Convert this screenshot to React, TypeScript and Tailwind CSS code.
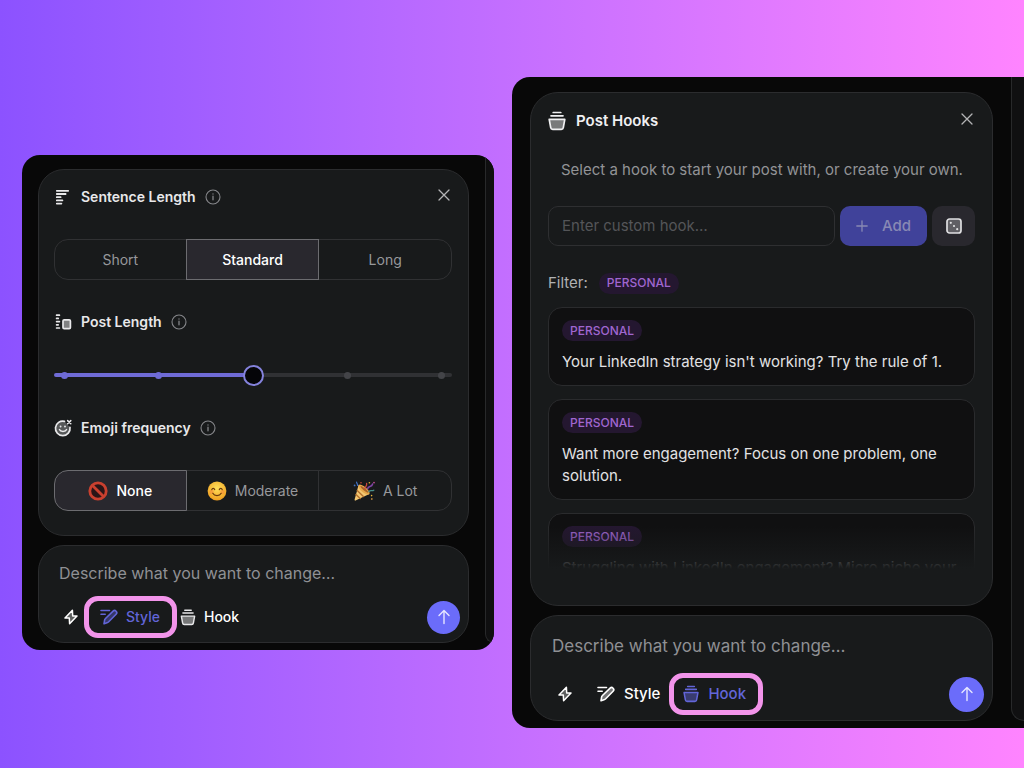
import { useState } from "react";
import type { ReactNode } from "react";

function SentenceIcon() {
  return (
    <svg width="18" height="18" viewBox="0 0 18 18" className="shrink-0" stroke="currentColor" strokeWidth="1.8" strokeLinecap="round">
      <path d="M2.8 2.8h11.4M2.8 6h8.8M2.8 9.2h3.8M2.8 12.4h5.6M2.8 15.6h4.6" />
    </svg>
  );
}

function PostLengthIcon() {
  return (
    <svg width="18" height="18" viewBox="0 0 18 18" className="shrink-0" fill="none" stroke="currentColor" strokeWidth="1.7">
      <path d="M2.6 2.2h2.8M2.6 5.4h1.6M2.6 8.6h2.8M2.6 11.8h1.6M2.6 15h2.8" strokeLinecap="round" />
      <rect x="9" y="6.9" width="7.4" height="8.8" rx="1.2" fill="currentColor" fillOpacity=".5" />
    </svg>
  );
}

function EmojiIcon() {
  return (
    <svg width="18" height="18" viewBox="0 0 18 18" className="shrink-0" fill="none" stroke="currentColor" strokeWidth="1.7" strokeLinecap="round">
      <path d="M10.5 2.3A7.3 7.3 0 1 0 16 8.4" fill="currentColor" fillOpacity=".3" />
      <path d="M13.6 1.6l3.2 3.2M16.8 1.6l-3.2 3.2" strokeWidth="1.5" />
      <path d="M5.4 10.6c1 2.6 6.2 2.6 7.2 0" strokeWidth="1.5" />
      <path d="M6.6 7.4v.1M11 7.4v.1" strokeWidth="1.9" />
    </svg>
  );
}

function HookIcon({ className }: { className: string }) {
  return (
    <svg viewBox="0 0 18 20" className={className} fill="none" stroke="currentColor" strokeWidth="1.7" strokeLinecap="round" strokeLinejoin="round">
      <path d="M5.2 1.5h7.6M3 4.8h12" />
      <path d="M1.2 8.4h15.6l-1.5 8.2a2 2 0 0 1-2 1.7H4.7a2 2 0 0 1-2-1.7z" fill="currentColor" fillOpacity=".45" />
    </svg>
  );
}

function StyleIcon() {
  return (
    <svg width="18" height="16" viewBox="0 0 18 16" className="shrink-0" fill="none" stroke="currentColor" strokeWidth="1.6" strokeLinecap="round" strokeLinejoin="round">
      <path d="M1 1.5h8.5M1 5.3h4.2" />
      <path d="M4 14.8l.6-3.6a3 3 0 0 1 .9-1.7l7.6-7.3a2.1 2.1 0 0 1 3 3l-7.4 7.6a3 3 0 0 1-1.7.9z" fill="currentColor" fillOpacity=".4" />
    </svg>
  );
}

function BoltIcon() {
  return (
    <svg width="14" height="16" viewBox="0 0 14 16" className="shrink-0" fill="none" stroke="currentColor" strokeWidth="1.5" strokeLinejoin="round">
      <path d="M8.4 1.2L1 9h4.3l.3 5.8L13 7H8.7z" fill="currentColor" fillOpacity=".3" />
    </svg>
  );
}

function InfoIcon() {
  return (
    <svg width="16" height="16" viewBox="0 0 16 16" fill="none" stroke="currentColor" strokeLinecap="round">
      <circle cx="8" cy="8" r="7" strokeWidth="1.1" />
      <path d="M8 7.2v3.6M8 4.9v.1" strokeWidth="1.3" />
    </svg>
  );
}

function DiceIcon() {
  return (
    <svg width="16" height="16" viewBox="0 0 16 16" fill="none">
      <rect x="1" y="1" width="14" height="14" rx="2.5" stroke="currentColor" strokeWidth="1.7" fill="currentColor" fillOpacity=".3" />
      <g fill="currentColor">
        <circle cx="4.8" cy="4.8" r="1.1" />
        <circle cx="8" cy="8" r="1.1" />
        <circle cx="11.2" cy="11.2" r="1.1" />
      </g>
    </svg>
  );
}

function ProhibitedEmoji() {
  return (
    <svg width="20" height="20" viewBox="0 0 20 20" fill="none" stroke="#c9402f" strokeWidth="2.8">
      <circle cx="10" cy="10" r="8.2" fill="#2a1517" />
      <path d="M4.2 4.2l11.6 11.6" />
    </svg>
  );
}

function SmileEmoji() {
  return (
    <svg width="20" height="20" viewBox="0 0 20 20" fill="none">
      <defs>
        <radialGradient id="smile" cx=".5" cy=".35" r=".65">
          <stop offset="0" stopColor="#ffe05a" />
          <stop offset="1" stopColor="#f0a020" />
        </radialGradient>
      </defs>
      <circle cx="10" cy="10" r="9.4" fill="url(#smile)" />
      <circle cx="4.6" cy="11" r="2.2" fill="#f58a3a" opacity=".55" />
      <circle cx="15.4" cy="11" r="2.2" fill="#f58a3a" opacity=".55" />
      <path d="M4.8 8.6c.5-1.7 2.4-1.7 2.9 0M12.3 8.6c.5-1.7 2.4-1.7 2.9 0M5.8 12.3c1.6 3 6.8 3 8.4 0" stroke="#6b3a0c" strokeWidth="1.2" strokeLinecap="round" />
    </svg>
  );
}

function PartyEmoji() {
  return (
    <svg width="22" height="20" viewBox="0 0 22 20" fill="none" strokeLinecap="round">
      <path d="M5.6 4L1.6 18.6c-.2.8.3 1.2 1 1L16.4 13z" fill="#f3c873" />
      <path d="M4.2 9.4l6.2 6.2M3 13.6l4.2 4" stroke="#b5702c" strokeWidth="1.4" />
      <ellipse cx="11" cy="8.6" rx="2.8" ry="7" transform="rotate(-50 11 8.6)" fill="#e8a94a" />
      <ellipse cx="11.4" cy="8.3" rx="1.2" ry="5" transform="rotate(-50 11.4 8.3)" fill="#a8652b" />
      <path d="M12 7.5c.2-2.5 2.2-2.2 1.6-5.2" stroke="#c8463e" strokeWidth="1.3" />
      <path d="M14.6 7.8c.6-3.4 4.3-1 5-4.8" stroke="#8046a8" strokeWidth="1.5" />
      <path d="M15.8 10.6c1.8-2 3.2 0 5-1.4" stroke="#4a8f8a" strokeWidth="1.3" />
      <path d="M4.6 4.4C5 2.8 3.4 2.6 3.6 1.2" stroke="#3f6fc0" strokeWidth="1.3" />
      <g>
        <circle cx="1.6" cy="4.4" r=".9" fill="#3f6fc0" />
        <circle cx="8" cy="1.8" r=".8" fill="#c8463e" />
        <circle cx="16.4" cy="1.8" r=".8" fill="#e8b93c" />
        <circle cx="21" cy="1.6" r=".9" fill="#c04a90" />
        <circle cx="18.6" cy="14.6" r=".8" fill="#e8b93c" />
        <circle cx="18.8" cy="18" r=".9" fill="#b8823a" />
      </g>
    </svg>
  );
}

function CloseButton() {
  return (
    <button type="button" aria-label="Close" className="ml-auto flex h-5 w-4 items-center justify-center self-start text-[#b4b4b6]">
      <svg width="12" height="12" viewBox="0 0 12 12" stroke="currentColor" strokeWidth="1.3" strokeLinecap="round">
        <path d="M1 1l10 10M11 1L1 11" />
      </svg>
    </button>
  );
}

function SettingTitle({ icon, title, close }: { icon: ReactNode; title: string; close?: boolean }) {
  return (
    <div className="flex h-6 items-center text-[#e8e8ea]">
      {icon}
      <h2 className="ml-[9px] text-sm font-semibold">{title}</h2>
      <button type="button" aria-label={`About ${title}`} className="ml-[9px] text-[#85868a]">
        <InfoIcon />
      </button>
      {close && <CloseButton />}
    </div>
  );
}

type Option = { label: string; emoji?: ReactNode };

function Segmented({ options, initial }: { options: Option[]; initial: string }) {
  const [value, setValue] = useState(initial);

  return (
    <div className="grid h-[41px] grid-cols-3">
      {options.map((option) => (
        <button
          key={option.label}
          type="button"
          aria-pressed={value === option.label}
          onClick={() => setValue(option.label)}
          className={`-ml-px flex items-center justify-center gap-2 border text-sm first:ml-0 first:rounded-l-[14px] last:rounded-r-[14px] ${
            value === option.label
              ? "z-10 border-[#6c6c70] bg-[#29282e] font-medium text-white"
              : "border-[#303133] text-[#97989b]"
          }`}
        >
          {option.emoji}
          {option.label}
        </button>
      ))}
    </div>
  );
}

function LengthSlider() {
  const [value, setValue] = useState(2);
  const percent = (value / 4) * 100;

  return (
    <div className="relative flex h-[22px] items-center">
      <input
        type="range"
        min={0}
        max={4}
        value={value}
        aria-label="Post Length"
        onChange={(e) => setValue(Number(e.target.value))}
        className="h-1 w-full appearance-none rounded-full [&::-webkit-slider-thumb]:relative [&::-webkit-slider-thumb]:z-10 [&::-webkit-slider-thumb]:h-[21px] [&::-webkit-slider-thumb]:w-[21px] [&::-webkit-slider-thumb]:appearance-none [&::-webkit-slider-thumb]:rounded-full [&::-webkit-slider-thumb]:border-2 [&::-webkit-slider-thumb]:border-[#8482dc] [&::-webkit-slider-thumb]:bg-[#050508]"
        style={{ background: `linear-gradient(to right, #6f6bd6 ${percent}%, #303134 ${percent}%)` }}
      />
      <div className="pointer-events-none absolute inset-x-0 flex justify-between px-[7px]">
        {[0, 1, 2, 3, 4].map((step) => (
          <span
            key={step}
            className={`h-[7px] w-[7px] rounded-full ${
              step === value ? "opacity-0" : step < value ? "bg-[#6f6bd6]" : "bg-[#434448]"
            }`}
          />
        ))}
      </div>
    </div>
  );
}

function Badge() {
  return (
    <span className="inline-flex h-[21px] items-center rounded-full bg-[#241730] px-2 text-xs font-medium text-[#a066d0]">
      PERSONAL
    </span>
  );
}

const hooks = [
  "Your LinkedIn strategy isn't working? Try the rule of 1.",
  "Want more engagement? Focus on one problem, one solution.",
  "Struggling with LinkedIn engagement? Micro niche your",
];

const highlight = "h-[42px] rounded-[14px] border-[5px] border-[#f294ea] text-[#6265d8]";

function StylePanel() {
  return (
    <section className="flex overflow-hidden rounded-[18px] bg-[#080808]">
      <div className="flex min-w-0 flex-1 flex-col gap-[9px] px-4 pt-[14px] pb-[7px]">
        <div className="flex flex-col gap-[30px] rounded-[26px] border border-[#2b2c2e] bg-[#181a1b] pt-[15px] pr-4 pb-6 pl-[15px]">
          <SettingTitle icon={<SentenceIcon />} title="Sentence Length" close />
          <Segmented initial="Standard" options={[{ label: "Short" }, { label: "Standard" }, { label: "Long" }]} />
          <SettingTitle icon={<PostLengthIcon />} title="Post Length" />
          <LengthSlider />
          <SettingTitle icon={<EmojiIcon />} title="Emoji frequency" />
          <Segmented
            initial="None"
            options={[
              { label: "None", emoji: <ProhibitedEmoji /> },
              { label: "Moderate", emoji: <SmileEmoji /> },
              { label: "A Lot", emoji: <PartyEmoji /> },
            ]}
          />
        </div>

        <form
          onSubmit={(e) => e.preventDefault()}
          className="rounded-[26px] border border-[#2b2c2e] bg-[#181a1b] pt-[15px] pr-2 pb-1 pl-5"
        >
          <input
            type="text"
            aria-label="Describe what you want to change"
            placeholder="Describe what you want to change…"
            className="mb-[11px] block h-6 w-full text-base placeholder-[#8f9094] outline-none"
          />
          <div className="flex items-center pl-[5px] text-sm font-medium text-white">
            <button type="button" aria-label="Quick actions" className="w-5">
              <BoltIcon />
            </button>
            <button type="button" className={`flex items-center gap-2 pr-3 pl-[11px] ${highlight}`}>
              <StyleIcon />
              Style
            </button>
            <button type="button" className="ml-[3px] flex items-center gap-2">
              <HookIcon className="h-[17px] w-4 text-[#e8e8ea]" />
              Hook
            </button>
            <button type="submit" aria-label="Send" className="ml-auto flex h-[33px] w-[33px] items-center justify-center rounded-full bg-[#6b6cfa]">
              <SendArrow />
            </button>
          </div>
        </form>
      </div>
      <div className="mb-[7px] w-[9px] rounded-bl-[14px] border-b border-l border-[#28292a] bg-[#0f0f10]" />
    </section>
  );
}

function SendArrow() {
  return (
    <svg width="14" height="16" viewBox="0 0 14 16" fill="none" stroke="#e6e6ff" strokeWidth="1.4" strokeLinecap="round" strokeLinejoin="round">
      <path d="M7 14.5v-13M2 6.5l5-5 5 5" />
    </svg>
  );
}

function HooksPanel() {
  return (
    <section className="flex overflow-hidden rounded-l-[18px] bg-[#080808]">
      <div className="flex min-w-0 flex-1 flex-col gap-[9px] px-[18px] pt-[15px] pb-[7px]">
        <div className="rounded-[28px] border border-[#2b2c2e] bg-[#181a1b] px-[17px] pt-4 pb-[13px]">
          <div className="flex h-6 items-center text-[#f0f0f2]">
            <HookIcon className="h-5 w-[18px]" />
            <h2 className="ml-[10px] text-[15px] font-semibold">Post Hooks</h2>
            <CloseButton />
          </div>
          <p className="mt-[26px] pl-[13px] text-[15px] leading-[22px] text-[#929396]">
            Select a hook to start your post with, or create your own.
          </p>
          <form onSubmit={(e) => e.preventDefault()} className="mt-[25px] flex h-10 gap-[5px]">
            <input
              type="text"
              aria-label="Custom hook"
              placeholder="Enter custom hook…"
              className="min-w-0 flex-1 rounded-[10px] border border-[#2e2f31] px-[13px] text-[15px] placeholder-[#545558] outline-none"
            />
            <button type="submit" className="flex w-[87px] items-center justify-center gap-[14px] rounded-[10px] bg-[#40429a] text-[15px] font-medium text-[#8889b4]">
              <svg width="12" height="12" viewBox="0 0 12 12" stroke="currentColor" strokeWidth="1.3" strokeLinecap="round">
                <path d="M6 .8v10.4M.8 6h10.4" />
              </svg>
              Add
            </button>
            <button type="button" aria-label="Random hook" className="flex w-[43px] items-center justify-center rounded-[10px] bg-[#29282e] text-[#e0e0e2]">
              <DiceIcon />
            </button>
          </form>
          <div className="mt-[26px] flex h-[22px] items-center gap-[11px] text-[15px] text-[#b0b1b3]">
            Filter:
            <button type="button" className="flex">
              <Badge />
            </button>
          </div>
          <div className="relative mt-[13px]">
            <ul className="flex flex-col gap-[13px]">
              {hooks.map((hook) => (
                <li
                  key={hook}
                  className="flex flex-col items-start gap-[10px] rounded-[14px] border border-[#2a2b2d] bg-[#101011] px-[13px] py-3"
                >
                  <Badge />
                  <p className="text-[15px] leading-[22px] text-[#e2e2e4]">{hook}</p>
                </li>
              ))}
            </ul>
            {/* fades the last hook into the card */}
            <div className="pointer-events-none absolute inset-x-0 bottom-0 h-[66px] bg-linear-to-t from-[#181a1b] from-35% to-[#181a1b]/0" />
          </div>
        </div>

        <form
          onSubmit={(e) => e.preventDefault()}
          className="rounded-[28px] border border-[#2b2c2e] bg-[#181a1b] pt-[17px] pr-2 pb-[5px] pl-[21px]"
        >
          <input
            type="text"
            aria-label="Describe what you want to change"
            placeholder="Describe what you want to change…"
            className="mb-[14px] block h-[26px] w-full text-[17px] placeholder-[#8f9094] outline-none"
          />
          <div className="flex items-center pl-[6px] text-[15px] font-medium text-white">
            <button type="button" aria-label="Quick actions" className="w-[39px]">
              <BoltIcon />
            </button>
            <button type="button" className="mr-[9px] flex items-center gap-[9px]">
              <StyleIcon />
              Style
            </button>
            <button type="button" className={`flex items-center gap-[9px] pr-3 pl-[9px] ${highlight}`}>
              <HookIcon className="h-[18px] w-4" />
              Hook
            </button>
            <button type="submit" aria-label="Send" className="ml-auto flex h-[35px] w-[35px] items-center justify-center rounded-full bg-[#6b6cfa]">
              <SendArrow />
            </button>
          </div>
        </form>
      </div>
      <div className="mb-[7px] w-[13px] rounded-bl-[14px] border-b border-l border-[#28292a] bg-[#101011]" />
    </section>
  );
}

export default function App() {
  return (
    <main className="grid min-h-screen grid-cols-[472fr_512fr] items-center gap-[18px] bg-linear-to-r from-[#8c52ff] to-[#ff84ff] pt-[37px] pl-[22px] font-['Inter',sans-serif]">
      <StylePanel />
      <HooksPanel />
    </main>
  );
}
